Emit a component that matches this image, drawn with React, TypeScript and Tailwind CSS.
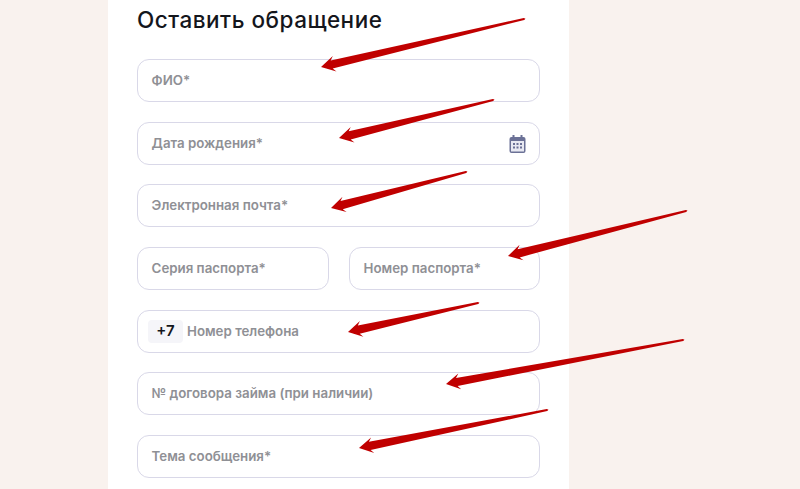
const font = "font-['Inter','Noto_Sans',sans-serif]";

const arrows: [number, number, number, number][] = [
  [524, 19, 321, 67],
  [493, 100, 339, 138],
  [466, 172, 331, 208],
  [686, 211, 508, 256],
  [478, 303, 348, 332],
  [683, 340, 446, 384],
  [547, 410, 359, 448],
];

function arrowPoints([x1, y1, x2, y2]: [number, number, number, number]) {
  const len = Math.hypot(x2 - x1, y2 - y1);
  const ux = (x2 - x1) / len;
  const uy = (y2 - y1) / len;
  const nx = -uy;
  const ny = ux;
  const p = (along: number, side: number) =>
    `${(x1 + ux * along + nx * side).toFixed(1)},${(y1 + uy * along + ny * side).toFixed(1)}`;
  return [
    p(0, -1),
    p(-1.5, 0),
    p(0, 1),
    p(len - 11, 4.2),
    p(len - 14, 8),
    p(len, 0),
    p(len - 14, -8),
    p(len - 11, -4.2),
  ].join(" ");
}

function Field({ label, className = "pl-[13.6px]", children }: { label?: string; className?: string; children?: React.ReactNode }) {
  return (
    <div className={`flex h-[43px] items-center rounded-[12px] border border-[#d9d8e8] bg-white pr-[13px] pt-[1px] text-[13.3px] font-semibold text-[#8f9095] ${className}`}>
      {label}
      {children}
    </div>
  );
}

function CalendarIcon() {
  return (
    <svg width="17" height="18" viewBox="0 0 17 18" className="ml-auto">
      <rect x="0.5" y="2" width="16" height="16" rx="2" fill="#6b7196" />
      <rect x="3.5" y="0" width="2" height="4" fill="#6b7196" />
      <rect x="11.5" y="0" width="2" height="4" fill="#6b7196" />
      <rect x="2" y="6" width="13" height="10.5" fill="#e8e9f2" />
      {[4, 7.5, 11].map((x) =>
        [8, 11.5].map((y) => <rect key={`${x}-${y}`} x={x} y={y} width="2" height="2" fill="#6b7196" />)
      )}
    </svg>
  );
}

export default function App() {
  return (
    <div className={`relative h-[489px] w-[800px] overflow-hidden bg-[#f9f2ee] ${font}`}>
      <div className="ml-[108px] flex h-full w-[461px] flex-col bg-white px-[29px]">
        <h1 className="mt-[5px] h-[54px] text-[22.5px] font-medium leading-[30px] tracking-[0.5px] text-[#14161c]">Оставить обращение</h1>
        <div className="flex flex-col gap-[19.67px]">
          <Field label="ФИО*" />
          <Field label="Дата рождения*">
            <CalendarIcon />
          </Field>
          <Field label="Электронная почта*" />
          <div className="flex gap-[20px]">
            <Field label="Серия паспорта*" className="w-[192px] pl-[13.6px]" />
            <Field label="Номер паспорта*" className="flex-1 pl-[13.6px]" />
          </div>
          <Field className="pl-[10px]">
            <span className="mr-[4px] flex h-[23px] w-[35px] items-center justify-center rounded-[4px] bg-[#f5f5f9] text-[15px] font-semibold text-[#14161c]">+7</span>
            Номер телефона
          </Field>
          <Field label="№ договора займа (при наличии)" />
          <Field label="Тема сообщения*" />
        </div>
      </div>
      <svg className="pointer-events-none absolute inset-0" width="800" height="489" viewBox="0 0 800 489">
        {arrows.map((a, i) => (
          <polygon key={i} points={arrowPoints(a)} fill="#c00000" />
        ))}
      </svg>
    </div>
  );
}
